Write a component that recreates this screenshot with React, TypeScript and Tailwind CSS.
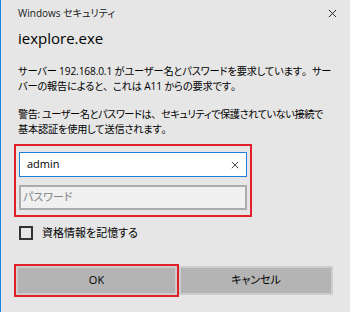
import React from "react";

function CrossIcon({ className }: { className?: string }) {
  return (
    <svg viewBox="0 0 10 10" className={className} fill="none">
      <path d="M1 1 L9 9 M9 1 L1 9" stroke="currentColor" strokeWidth="1.1" />
    </svg>
  );
}

// full-width punctuation, kept out of the proportional squeeze
function P({ children }: { children: React.ReactNode }) {
  return <span className="[font-feature-settings:normal]">{children}</span>;
}

export default function App() {
  return (
    <div className="w-[350px] h-[312px] bg-[#e6e6e6] border-l border-[#1a86e0] text-black font-['Segoe_UI','Open_Sans','Noto_Sans_CJK_JP',sans-serif] [font-feature-settings:'palt'] overflow-hidden">
      <div className="pl-[13px] pr-[12px]">
        {/* title bar */}
        <div className="flex items-center justify-between pt-[6px] h-[20px]">
          <span className="pl-[4px] text-[10px] leading-[14px] text-[#1a1a1a]">
            Windows セキュリティ
          </span>
          <CrossIcon className="w-[9px] h-[9px] text-[#222] mr-[1px]" />
        </div>

        <div className="mt-[8px] pl-[4px] h-[20px] text-[15px] leading-[20px]">
          iexplore.exe
        </div>

        <p className="mt-[16px] pl-[4px] text-[10.2px] leading-[15px] whitespace-nowrap tracking-[-0.15px]">
          サーバー 192.168.0.1 がユーザー名とパスワードを要求しています<P>。</P>サー
          <br />
          バーの報告によると<P>、</P>これは A11 からの要求です<P>。</P>
        </p>
        <p className="mt-[13px] pl-[4px] text-[10.2px] leading-[15px] whitespace-nowrap">
          <span className="tracking-[-0.45px]">
            警告: ユーザー名とパスワードは<P>、</P>セキュリティで保護されていない接続で
          </span>
          <br />
          <span className="tracking-[-0.2px]">基本認証を使用して送信されます<P>。</P></span>
        </p>

        {/* credential inputs */}
        <div className="mt-[7px] w-[238px] border-2 border-[#e0202b] pt-[6px] pb-[5px] px-[3px] flex flex-col gap-[8px]">
          <div className="h-[25px] bg-white border border-[#1f7fd6] flex items-center justify-between pl-[7px] pr-[7px]">
            <span className="text-[11px]">admin</span>
            <CrossIcon className="w-[8px] h-[8px] text-[#333]" />
          </div>
          <div className="h-[25px] bg-[#f0f0f0] border-2 border-[#ababab] flex items-center pl-[2px]">
            <span className="text-[11px] text-[#858585]">パスワード</span>
          </div>
        </div>

        {/* remember checkbox */}
        <div className="mt-[9px] flex items-center h-[14px] pl-[5px]">
          <div className="w-[14px] h-[14px] border-2 border-[#333]" />
          <span className="ml-[9px] text-[11px] leading-[14px]">資格情報を記憶する</span>
        </div>

        {/* buttons */}
        <div className="mt-[24px] flex items-center">
          <div className="w-[165px] h-[33px] border-2 border-[#e0202b]">
            <button className="w-full h-full bg-[#b4b4b4] border-2 border-[#cdcdcd] text-[11px]">
              OK
            </button>
          </div>
          <button className="w-[154px] h-[29px] bg-[#b4b4b4] border-2 border-[#cdcdcd] text-[11px]">
            キャンセル
          </button>
        </div>
      </div>
    </div>
  );
}
